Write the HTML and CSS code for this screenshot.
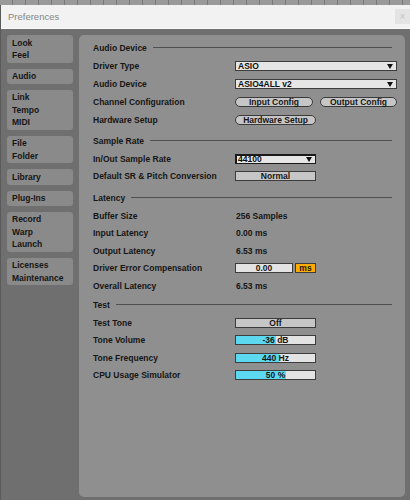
FILE: index.html
```html
<!DOCTYPE html>
<html lang="en">
<head>
    <meta charset="UTF-8">
    <title>Preferences</title>
    <link rel="stylesheet" href="styles.css">
</head>
<body>
    <div class="ruler"></div>
    <div class="window">
        <div class="titlebar">
            <span class="title">Preferences</span>
            <span class="close">&times;</span>
        </div>
        <div class="content">
            <nav class="tabs">
                <div class="tab">Look<br>Feel</div>
                <div class="tab">Audio</div>
                <div class="tab">Link<br>Tempo<br>MIDI</div>
                <div class="tab">File<br>Folder</div>
                <div class="tab">Library</div>
                <div class="tab">Plug-Ins</div>
                <div class="tab">Record<br>Warp<br>Launch</div>
                <div class="tab">Licenses<br>Maintenance</div>
            </nav>
            <main class="panel">
                <section class="section section-device">
                    <div class="section-head"><span>Audio Device</span></div>
                    <div class="row">
                        <span class="label">Driver Type</span>
                        <div class="select select-wide"><span>ASIO</span><i class="arrow"></i></div>
                    </div>
                    <div class="row">
                        <span class="label">Audio Device</span>
                        <div class="select select-wide"><span>ASIO4ALL v2</span><i class="arrow"></i></div>
                    </div>
                    <div class="row">
                        <span class="label">Channel Configuration</span>
                        <div class="pill-group">
                            <button class="pill pill-input">Input Config</button>
                            <button class="pill pill-output">Output Config</button>
                        </div>
                    </div>
                    <div class="row">
                        <span class="label">Hardware Setup</span>
                        <button class="pill pill-hardware">Hardware Setup</button>
                    </div>
                </section>

                <section class="section">
                    <div class="section-head"><span>Sample Rate</span></div>
                    <div class="row">
                        <span class="label">In/Out Sample Rate</span>
                        <div class="select select-focus"><span>44100</span><i class="arrow"></i></div>
                    </div>
                    <div class="row">
                        <span class="label">Default SR &amp; Pitch Conversion</span>
                        <div class="box">Normal</div>
                    </div>
                </section>

                <section class="section section-latency">
                    <div class="section-head"><span>Latency</span></div>
                    <div class="row">
                        <span class="label">Buffer Size</span>
                        <span class="value">256 Samples</span>
                    </div>
                    <div class="row">
                        <span class="label">Input Latency</span>
                        <span class="value">0.00 ms</span>
                    </div>
                    <div class="row">
                        <span class="label">Output Latency</span>
                        <span class="value">6.53 ms</span>
                    </div>
                    <div class="row">
                        <span class="label">Driver Error Compensation</span>
                        <div class="comp">
                            <div class="box box-field">0.00</div>
                            <div class="box box-unit">ms</div>
                        </div>
                    </div>
                    <div class="row">
                        <span class="label">Overall Latency</span>
                        <span class="value">6.53 ms</span>
                    </div>
                </section>

                <section class="section section-test">
                    <div class="section-head"><span>Test</span></div>
                    <div class="row">
                        <span class="label">Test Tone</span>
                        <div class="box">Off</div>
                    </div>
                    <div class="row">
                        <span class="label">Tone Volume</span>
                        <div class="box slider" style="--fill: 51%">-36 dB</div>
                    </div>
                    <div class="row">
                        <span class="label">Tone Frequency</span>
                        <div class="box slider" style="--fill: 55%">440 Hz</div>
                    </div>
                    <div class="row">
                        <span class="label">CPU Usage Simulator</span>
                        <div class="box slider" style="--fill: 63%">50 %</div>
                    </div>
                </section>
            </main>
        </div>
    </div>
</body>
</html>
```

FILE: styles.css
```css
body {
    margin: 0;
    padding: 0;
    width: 410px;
    height: 500px;
    overflow: hidden;
    background-color: #5a5a5a;
    font-family: 'Liberation Sans', Arial, sans-serif;
}

.ruler {
    height: 5px;
    background: repeating-linear-gradient(90deg, #9a9a9a 0 12px, #7a7a7a 12px 13px);
}

.window {
    margin-left: 1px;
    height: 495px;
    background-color: #6f6f6f;
}

.titlebar {
    height: 24px;
    display: flex;
    align-items: center;
    justify-content: space-between;
    background-color: #f2f2f2;
    box-sizing: border-box;
    border-bottom: 1px solid #fafafa;
    padding-left: 7px;
}

.title {
    font-size: 9.5px;
    color: #858585;
}

.close {
    width: 15px;
    height: 15px;
    display: flex;
    align-items: center;
    justify-content: center;
    background-color: #e4e4e4;
    color: #c4c4c4;
    font-size: 10px;
}

.content {
    display: flex;
    gap: 6px;
    padding: 6px 0 0 6px;
}

.tabs {
    width: 66px;
    display: flex;
    flex-direction: column;
    gap: 6px;
}

.tab {
    background-color: #8a8a8a;
    border-radius: 3px;
    padding: 1.5px 5px;
    font-size: 8.5px;
    line-height: 12.3px;
    font-weight: 700;
    color: #161616;
}

.panel {
    width: 326px;
    height: 462px;
    box-sizing: border-box;
    background-color: #8f8f8f;
    border-radius: 5px;
    padding: 4px 8px 0 14px;
    font-size: 8.5px;
    font-weight: 700;
    color: #161616;
}

.section {
    margin-top: 3px;
}

.section:first-child {
    margin-top: 0;
}

.section-latency {
    margin-top: 4.5px;
}

.section-test {
    margin-top: 2px;
}

.section-head {
    display: flex;
    align-items: center;
    height: 17px;
    padding-bottom: 1px;
    margin-right: 5px;
}

.section-head::after {
    content: "";
    flex: 1;
    margin-left: 6px;
    border-top: 1px solid #505050;
}

.row {
    display: flex;
    align-items: center;
    height: 17.4px;
}

.section-device .row {
    height: 18px;
}

.label {
    width: 142px;
    flex-shrink: 0;
}

.value {
    padding-left: 1px;
}

.select {
    height: 10px;
    box-sizing: border-box;
    width: 81px;
    display: flex;
    align-items: center;
    justify-content: space-between;
    padding: 0 3px 0 2px;
    background-color: #e6e6e6;
    border: 1px solid #3c3c3c;
    line-height: 8px;
    color: #101010;
}

.select-wide {
    width: 162px;
}

.select-focus {
    border-color: #1a1a1a;
    border-width: 2px 1px 1px 2px;
    padding-left: 1px;
}

.arrow {
    width: 0;
    height: 0;
    border-left: 3px solid transparent;
    border-right: 3px solid transparent;
    border-top: 5px solid #111;
}

.pill-group {
    display: flex;
    gap: 7px;
}

.pill {
    height: 10px;
    box-sizing: border-box;
    padding: 0;
    border: 1px solid #3a3a3a;
    border-radius: 5px;
    background-color: #c6c6c6;
    font-family: 'Liberation Sans', Arial, sans-serif;
    font-size: 8.5px;
    font-weight: 700;
    line-height: 8px;
    color: #161616;
}

.pill-input {
    width: 78px;
}

.pill-output {
    width: 77px;
}

.pill-hardware {
    width: 81px;
}

.box {
    width: 81px;
    height: 10px;
    box-sizing: border-box;
    border: 1px solid #3c3c3c;
    background-color: #c6c6c6;
    text-align: center;
    line-height: 8px;
    color: #161616;
}

.comp {
    display: flex;
    gap: 2px;
}

.box-field {
    width: 58px;
    background-color: #e3e3e3;
}

.box-unit {
    width: 21px;
    background-color: #ffab00;
}

.slider {
    background: linear-gradient(90deg, #5cd9f0 var(--fill), #e3e3e3 var(--fill));
}
```
